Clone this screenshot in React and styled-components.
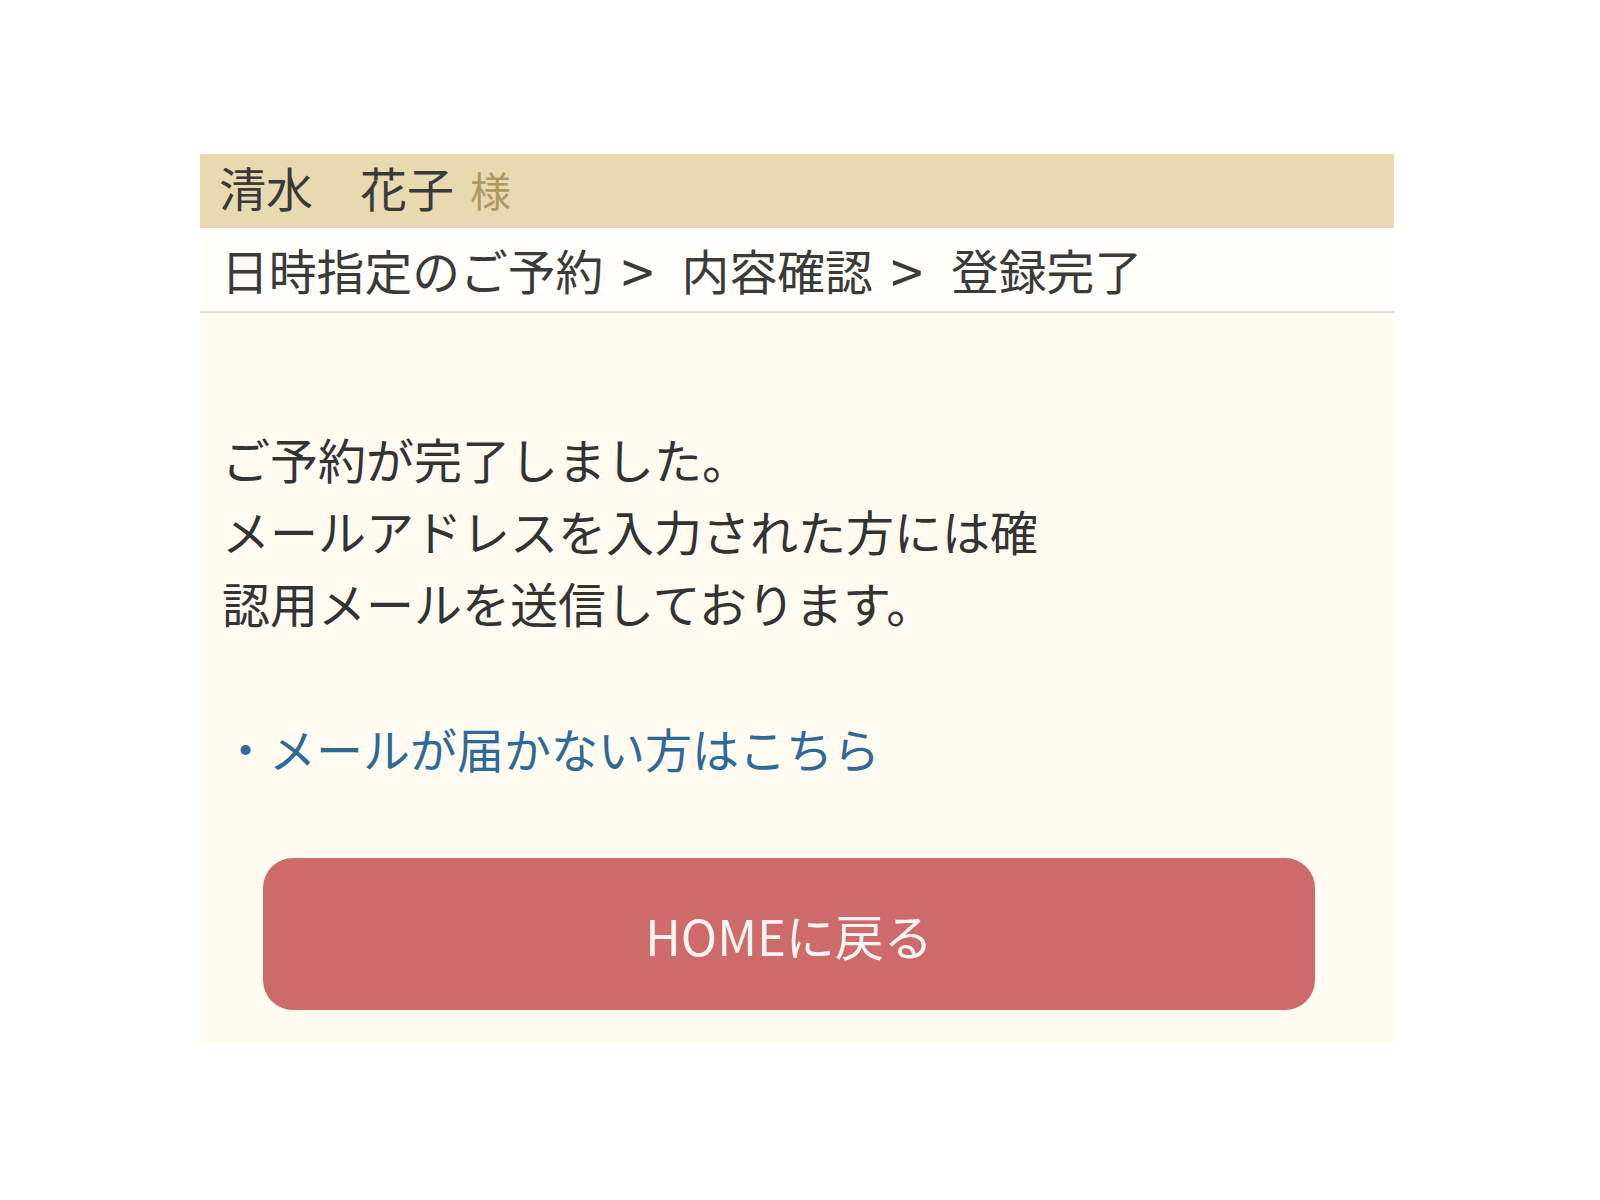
import React from "react";
import styled, { createGlobalStyle } from "styled-components";

const GlobalStyle = createGlobalStyle`
  html, body {
    margin: 0;
    padding: 0;
    background: #ffffff;
  }
  body {
    font-family: "Noto Sans CJK JP", "Noto Sans", sans-serif;
    color: #333333;
  }
`;

const Page = styled.div`
  padding: 154px 0 0 200px;
`;

const Panel = styled.div`
  width: 1194px;
  background: #fffbf0;
`;

const NameBar = styled.div`
  height: 74px;
  display: flex;
  align-items: center;
  padding: 0 0 10px 19px;
  box-sizing: border-box;
  background: #e8d9b0;
  font-size: 47px;
  color: #3a3a3a;
  line-height: 1;
`;

const Honorific = styled.span`
  font-size: 41px;
  color: #ad9a60;
  margin-left: 16px;
  margin-top: 6px;
`;

const Breadcrumb = styled.div`
  height: 83px;
  display: flex;
  align-items: center;
  padding-left: 21px;
  background: #fffefa;
  border-bottom: 2px solid #e6e0d2;
  font-size: 47.8px;
  color: #3a3a3a;
`;

const Separator = styled.span`
  font-size: 58px;
  line-height: 1;
  margin: 0 28px 0 18px;
`;

const Content = styled.div`
  padding: 109px 22px 33px 22px;
`;

const Message = styled.p`
  margin: 0;
  font-size: 48px;
  line-height: 72px;
  color: #333333;
`;

const HelpLink = styled.a`
  display: block;
  margin-top: 74px;
  font-size: 47px;
  line-height: 72px;
  color: #2f6a96;
  text-decoration: none;
  cursor: pointer;
`;

const HomeButton = styled.button`
  display: flex;
  align-items: center;
  justify-content: center;
  width: 1052px;
  height: 152px;
  margin: 74px 0 0 41px;
  border: none;
  border-radius: 30px;
  background: #cc6b6a;
  color: #fdf3f1;
  font-family: "Noto Sans CJK JP", "Noto Sans", sans-serif;
  font-size: 49px;
  cursor: pointer;
`;

export default function App() {
  return (
    <>
      <GlobalStyle />
      <Page>
        <Panel>
          <NameBar>
            清水　花子<Honorific>様</Honorific>
          </NameBar>
          <Breadcrumb>
            日時指定のご予約<Separator>&gt;</Separator>内容確認
            <Separator>&gt;</Separator>登録完了
          </Breadcrumb>
          <Content>
            <Message>
              ご予約が完了しました。
              <br />
              メールアドレスを入力された方には確
              <br />
              認用メールを送信しております。
            </Message>
            <HelpLink>・メールが届かない方はこちら</HelpLink>
            <HomeButton>HOMEに戻る</HomeButton>
          </Content>
        </Panel>
      </Page>
    </>
  );
}
